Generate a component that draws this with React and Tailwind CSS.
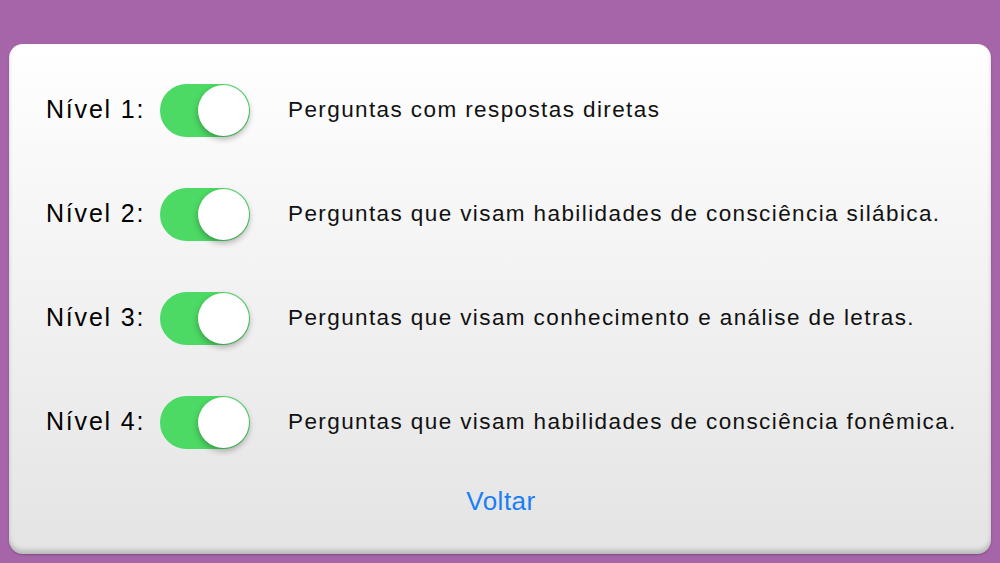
import React from 'react'

const levels = [
    { n: 1, text: 'Perguntas com respostas diretas' },
    { n: 2, text: 'Perguntas que visam habilidades de consciência silábica.' },
    { n: 3, text: 'Perguntas que visam conhecimento e análise de letras.' },
    { n: 4, text: 'Perguntas que visam habilidades de consciência fonêmica.' },
]

function Toggle() {
    return (
        <div className="relative w-[90px] h-[53px] rounded-full bg-[#4cd964] shrink-0">
            <div className="absolute right-[1px] top-[1px] w-[51px] h-[51px] rounded-full bg-white shadow-[0_3px_6px_rgba(0,0,0,0.3)]"></div>
        </div>
    )
}

export default function App() {
    return (
        <main className="w-[1000px] h-[563px] bg-[#a664a9] pt-[44px] pl-[9px] font-['Liberation_Sans',Arial,sans-serif]">
            <div className="w-[982px] h-[510px] rounded-[14px] bg-gradient-to-b from-white to-[#e4e4e4] shadow-[inset_0_-4px_4px_rgba(0,0,0,0.18),0_1px_2px_rgba(0,0,0,0.25)] pt-[14px] flex flex-col">
                {levels.map((l) => (
                    <div key={l.n} className="h-[104px] flex items-center">
                        <span className="ml-[37px] w-[114px] text-[25px] tracking-[1.8px] text-black">Nível {l.n}:</span>
                        <Toggle />
                        <span className="ml-[38px] text-[22.5px] tracking-[1.4px] text-[#111] whitespace-nowrap">{l.text}</span>
                    </div>
                ))}
                <div className="mt-[8px] text-center">
                    <button className="text-[26px] tracking-[0.5px] text-[#1a7ef5] ml-[2px]">Voltar</button>
                </div>
            </div>
        </main>
    )
}
